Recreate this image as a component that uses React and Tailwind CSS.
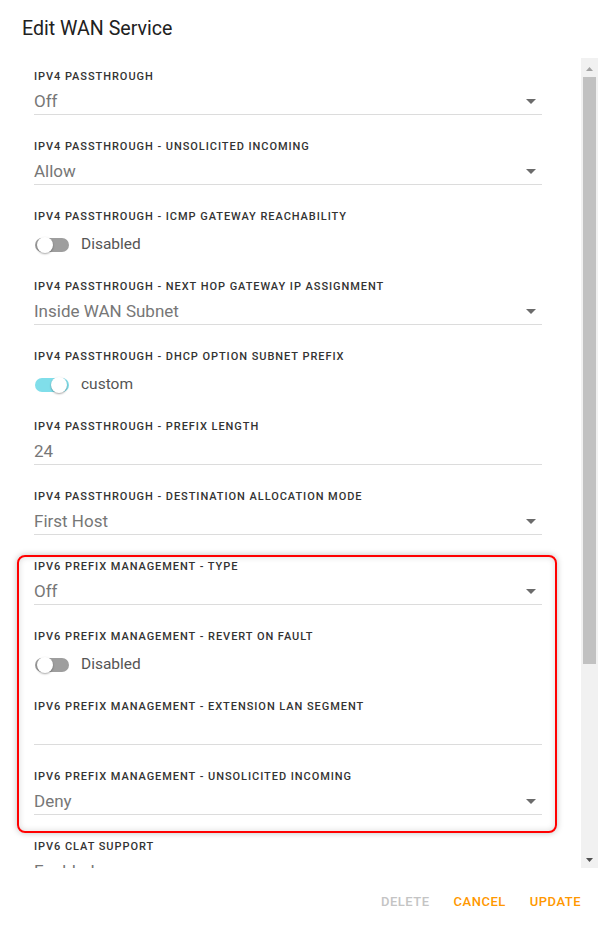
const FIELDS = [
  { label: 'IPv4 Passthrough', type: 'select', value: 'Off' },
  { label: 'IPv4 Passthrough - Unsolicited Incoming', type: 'select', value: 'Allow' },
  { label: 'IPv4 Passthrough - ICMP Gateway Reachability', type: 'toggle', on: false, value: 'Disabled' },
  { label: 'IPv4 Passthrough - Next Hop Gateway IP Assignment', type: 'select', value: 'Inside WAN Subnet' },
  { label: 'IPv4 Passthrough - DHCP Option Subnet Prefix', type: 'toggle', on: true, value: 'custom' },
  { label: 'IPv4 Passthrough - Prefix Length', type: 'text', value: '24' },
  { label: 'IPv4 Passthrough - Destination Allocation Mode', type: 'select', value: 'First Host' },
  { label: 'IPv6 Prefix Management - Type', type: 'select', value: 'Off' },
  { label: 'IPv6 Prefix Management - Revert On Fault', type: 'toggle', on: false, value: 'Disabled' },
  { label: 'IPv6 Prefix Management - Extension LAN Segment', type: 'text', value: '' },
  { label: 'IPv6 Prefix Management - Unsolicited Incoming', type: 'select', value: 'Deny' },
  { label: 'IPv6 CLAT Support', type: 'select', value: 'Enabled' },
]

const font = { fontFamily: 'Roboto, "Liberation Sans", sans-serif' }

function Arrow() {
  return (
    <svg width="10" height="5" viewBox="0 0 10 5" className="shrink-0">
      <path d="M0 0h10L5 5z" fill="#6b6b6b" />
    </svg>
  )
}

function Toggle({ on }) {
  return (
    <div className={`relative h-[14px] w-[34px] rounded-full ${on ? 'bg-[#80deea]' : 'bg-[#9e9e9e]'}`}>
      <div
        className={`absolute top-[-1px] h-4 w-4 rounded-full bg-white shadow-[0_1px_2px_rgba(0,0,0,0.35)] ${on ? 'right-[2px]' : 'left-[2px]'}`}
      />
    </div>
  )
}

function Field({ f }) {
  return (
    <div className="h-[70px] pt-[11px]">
      <p className="text-[11px] font-medium uppercase leading-4 tracking-[0.95px] text-[#333]">{f.label}</p>
      {f.type === 'toggle' ? (
        <div className="mt-2 flex h-6 items-center gap-[12px] pl-[1px]">
          <Toggle on={f.on} />
          <span className="text-[15.5px] text-[#555]">{f.value}</span>
        </div>
      ) : (
        <div className="mt-[5px] flex h-[25px] items-center border-b border-[#dcdcdc] pr-[6px] pb-[1px]">
          <span className="flex-1 text-[17px] text-[#777]">{f.value}</span>
          {f.type === 'select' && <Arrow />}
        </div>
      )}
    </div>
  )
}

export default function App() {
  return (
    <div className="flex h-[932px] w-[598px] flex-col bg-white" style={font}>
      <h1 className="px-[22px] pt-[17px] pb-[18px] text-[19.6px] font-normal leading-[23px] text-[#212121]">Edit WAN Service</h1>

      <div className="flex h-[810px]">
        {/* scroll body */}
        <div className="relative flex-1 overflow-hidden pl-[34px] pr-[39px]">
          {FIELDS.map((f, i) => (
            <Field key={i} f={f} />
          ))}
          {/* highlight */}
          <div className="pointer-events-none absolute left-[17px] top-[497px] h-[278px] w-[540px] rounded-lg border-2 border-[#ff0000] shadow-[0_0_6px_rgba(0,0,0,0.25),inset_0_0_6px_rgba(0,0,0,0.15)]" />
        </div>

        {/* scrollbar */}
        <div className="flex w-[17px] flex-col bg-[#f1f1f1] pt-[2px]">
          <div className="flex h-[17px] items-center justify-center">
            <svg width="7" height="4" viewBox="0 0 7 4"><path d="M0 4L3.5 0L7 4z" fill="#a3a3a3" /></svg>
          </div>
          <div className="mx-[2px] h-[587px] bg-[#c1c1c1]" />
          <div className="flex-1" />
          <div className="flex h-[17px] items-center justify-center">
            <svg width="7" height="4" viewBox="0 0 7 4"><path d="M0 0h7L3.5 4z" fill="#505050" /></svg>
          </div>
        </div>
      </div>

      <div className="flex items-center justify-end gap-[24px] pt-[24px] pr-[17px] text-[13px] font-medium uppercase tracking-[0.5px]">
        <span className="text-[#c4c4c4]">Delete</span>
        <span className="text-[#ff9800]">Cancel</span>
        <span className="text-[#ff9800]">Update</span>
      </div>
    </div>
  )
}
